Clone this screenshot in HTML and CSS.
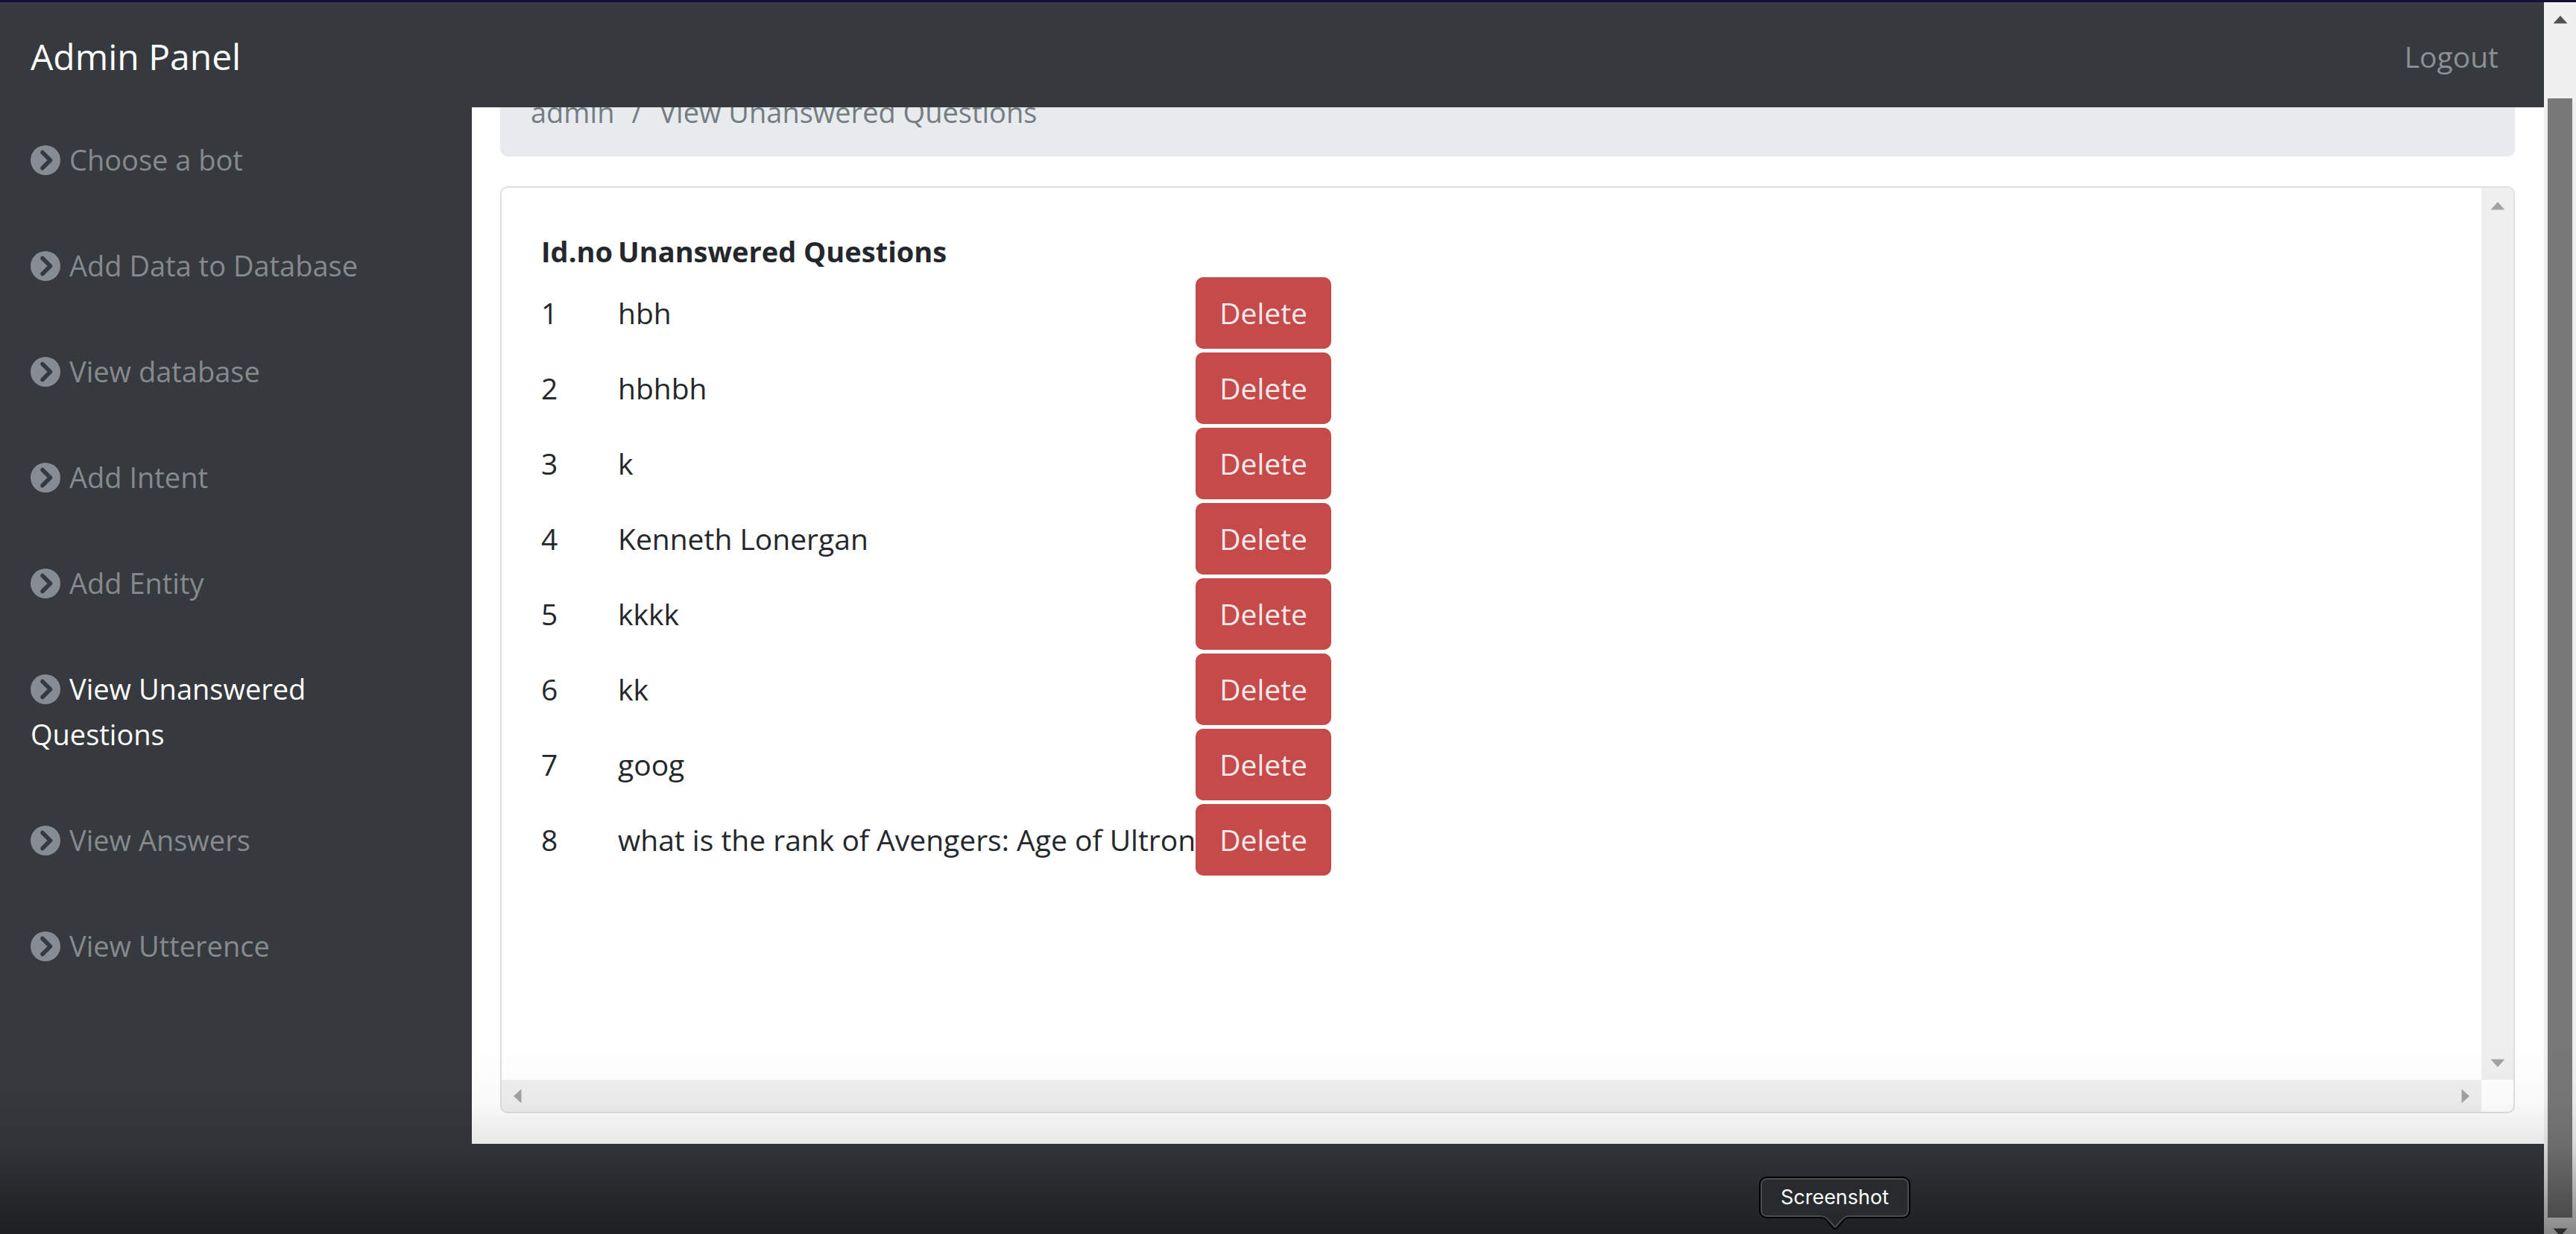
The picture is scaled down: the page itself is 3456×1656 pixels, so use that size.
FILE: index.html
```html
<!DOCTYPE html>
<html lang="en">
<head>
<meta charset="utf-8">
<title>Admin Panel</title>
<link rel="stylesheet" href="styles.css">
</head>
<body>
<svg class="defs" aria-hidden="true">
  <symbol id="chevron" viewBox="0 0 40 40">
    <circle cx="20" cy="20" r="20" fill="#868c93"/>
    <path d="M16 9.500 26.500 20 16 30.500" fill="none" stroke="#343a40" stroke-width="5.500" stroke-linecap="round" stroke-linejoin="round"/>
  </symbol>
  <symbol id="arrow" viewBox="0 0 20 12">
    <path d="M10 1 19.500 11.500H.5z" fill="currentColor"/>
  </symbol>
  <symbol id="side-arrow" viewBox="0 0 12 20">
    <path d="M1 10 11.500 .5v19z" fill="currentColor"/>
  </symbol>
</svg>
<div class="window">
  <div class="page">
    <header class="navbar">
      <a class="brand" href="#">Admin Panel</a>
      <a class="logout" href="#">Logout</a>
    </header>
    <div class="body">
      <nav class="sidebar">
        <a href="#"><svg class="icon"><use href="#chevron"/></svg>Choose a bot</a>
        <a href="#"><svg class="icon"><use href="#chevron"/></svg>Add Data to Database</a>
        <a href="#"><svg class="icon"><use href="#chevron"/></svg>View database</a>
        <a href="#"><svg class="icon"><use href="#chevron"/></svg>Add Intent</a>
        <a href="#"><svg class="icon"><use href="#chevron"/></svg>Add Entity</a>
        <a class="active" href="#"><svg class="icon"><use href="#chevron"/></svg>View Unanswered Questions</a>
        <a href="#"><svg class="icon"><use href="#chevron"/></svg>View Answers</a>
        <a href="#"><svg class="icon"><use href="#chevron"/></svg>View Utterence</a>
      </nav>
      <main class="content">
        <div class="breadcrumb"><span>admin</span><span>/</span><span>View Unanswered Questions</span></div>
        <section class="card">
          <div class="card-body">
            <table class="questions">
              <thead>
                <tr><th class="id">Id.no</th><th class="question">Unanswered Questions</th><td></td></tr>
              </thead>
              <tbody>
                <tr><td>1</td><td>hbh</td><td><button type="button">Delete</button></td></tr>
                <tr><td>2</td><td>hbhbh</td><td><button type="button">Delete</button></td></tr>
                <tr><td>3</td><td>k</td><td><button type="button">Delete</button></td></tr>
                <tr><td>4</td><td>Kenneth Lonergan</td><td><button type="button">Delete</button></td></tr>
                <tr><td>5</td><td>kkkk</td><td><button type="button">Delete</button></td></tr>
                <tr><td>6</td><td>kk</td><td><button type="button">Delete</button></td></tr>
                <tr><td>7</td><td>goog</td><td><button type="button">Delete</button></td></tr>
                <tr><td>8</td><td>what is the rank of Avengers: Age of Ultron</td><td><button type="button">Delete</button></td></tr>
              </tbody>
            </table>
          </div>
          <div class="bar bar-y"><svg class="arrow"><use href="#arrow"/></svg><svg class="arrow down"><use href="#arrow"/></svg></div>
          <div class="bar bar-x"><svg class="side-arrow"><use href="#side-arrow"/></svg><svg class="side-arrow right"><use href="#side-arrow"/></svg></div>
        </section>
      </main>
    </div>
  </div>
  <div class="page-scroll"><svg class="arrow"><use href="#arrow"/></svg><div class="thumb"></div><svg class="arrow down"><use href="#arrow"/></svg></div>
</div>
<div class="shade"></div>
<div class="tooltip" role="tooltip">Screenshot<svg class="pointer" viewBox="0 0 40 20"><path d="M0 0h40v2c-6 0-8 2-11 6l-6 8q-3 4-6 0l-6-8C8 4 6 2 0 2z" fill="#25282b"/><path d="M0 3c6 0 8 2 11 6l6 7q3 4 6 0l6-7c3-4 5-6 11-6" fill="none" stroke="#000" stroke-width="2"/><path d="M0 1c6 0 8 2 12 6l6 7q2 3 4 0l6-7c4-4 6-6 12-6" fill="none" stroke="#4a4c4e" stroke-width="2"/></svg></div>
</body>
</html>
```
FILE: styles.css
```css
* { box-sizing: border-box; }

body {
  margin: 0;
  background: #36393e;
  color: #24272b;
  font: 38px/61px "Open Sans", "Noto Sans", sans-serif;
  overflow: hidden;
}

a { color: inherit; text-decoration: none; }
svg { display: block; }
.defs { display: none; }

.window {
  display: flex;
  min-height: 100vh;
  border-top: 3px solid #130f3a;
}

.page {
  display: flex;
  flex: 1;
  flex-direction: column;
  padding-bottom: 121px;
}

.navbar {
  display: flex;
  align-items: center;
  justify-content: space-between;
  height: 141px;
  padding: 3px 61px 0 41px;
  color: #8c9095;
}

.brand { color: #fff; font-size: 48px; }
.logout { font-size: 39px; }

.body { display: flex; flex: 1; }

.sidebar {
  display: flex;
  flex: none;
  flex-direction: column;
  gap: 81px;
  width: 633px;
  padding: 40px 130px 0 41px;
  color: #868a8e;
}

.sidebar .active { color: #fff; }

.icon {
  display: inline-block;
  width: 40px;
  height: 40px;
  margin-right: 12px;
  vertical-align: -6px;
}

.content {
  display: flex;
  flex: 1;
  flex-direction: column;
  gap: 40px;
  padding: 0 39px 41px 38px;
  background: #fff;
  overflow: hidden;
}

.breadcrumb {
  display: flex;
  gap: 23px;
  margin-top: -57px;
  padding: 33px 41px 29px;
  border-radius: 10px;
  background: #e8ebee;
  color: #767c82;
}

.card {
  display: grid;
  flex: 1;
  grid-template: 1fr 43px / 1fr 43px;
  border: 2px solid #dfdfdf;
  border-radius: 10px;
  overflow: hidden;
}

.card-body { padding: 53px; }

.bar {
  display: flex;
  justify-content: space-between;
  align-items: center;
  background: #efefef;
  color: #a3a3a3;
}

.bar-y { flex-direction: column; padding: 18px 0 16px; }
.bar-x { padding: 0 15px; }

.arrow { width: 20px; height: 12px; }
.side-arrow { width: 12px; height: 20px; }
.down, .right { transform: rotate(180deg); }

.questions { border-collapse: collapse; }
.questions th { height: 64px; padding: 0; text-align: left; font-weight: 700; }
.questions .id { width: 103px; }
.questions .question { width: 775px; }
.questions td { padding: 0; font-size: 39px; white-space: nowrap; }
.questions tbody tr { height: 101px; }

button {
  display: block;
  width: 182px;
  height: 96px;
  border: 0;
  border-radius: 10px;
  background: #c54a4a;
  color: #fbe9ea;
  font: inherit;
}

.page-scroll {
  display: flex;
  flex-direction: column;
  align-items: center;
  width: 43px;
  padding-top: 17px;
  background: #f0f0f0;
  color: #505050;
}

.page-scroll .down { margin-top: 14px; margin-bottom: -4px; }
.thumb { flex: 1; width: 33px; margin-top: 100px; background: #787878; }

/* Darkening along the bottom edge of the screen */
.shade {
  position: fixed;
  inset: auto 0 0;
  height: 256px;
  background: linear-gradient(transparent, rgba(0, 0, 0, .02) 30%, rgba(0, 0, 0, .09) 53%, rgba(0, 0, 0, .28) 78%, rgba(0, 0, 0, .44));
}

.tooltip {
  position: fixed;
  left: 2360px;
  bottom: 21px;
  width: 203px;
  height: 56px;
  border: 2px solid #000;
  border-radius: 10px;
  background: #282b2e;
  box-shadow: inset 0 0 0 2px #4a4c4e;
  color: #fff;
  font: 27px/52px Inter, sans-serif;
  text-align: center;
}

.pointer {
  position: absolute;
  top: 50px;
  left: 80px;
  width: 40px;
  height: 20px;
}
```
